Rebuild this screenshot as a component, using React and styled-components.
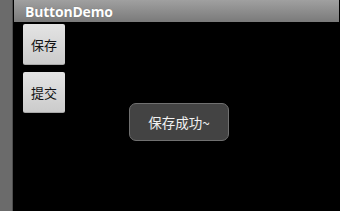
import React from "react";
import styled, { createGlobalStyle } from "styled-components";

const Global = createGlobalStyle`
  html, body { margin: 0; padding: 0; background: #000; }
  body { width: 340px; height: 211px; overflow: hidden; font-family: "Noto Sans", "Noto Sans CJK SC", sans-serif; }
  #root { width: 340px; height: 211px; }
`;

const Screen = styled.div`
  position: relative;
  display: flex;
  width: 340px;
  height: 211px;
  background: #000;
`;

const SideStrip = styled.div`
  width: 12px;
  flex: none;
  background: #6b6b6b;
  border-right: 1px solid #4e4e4e;
`;

const Main = styled.div`
  flex: 1;
  display: flex;
  flex-direction: column;
  padding-left: 1px;
  padding-right: 1px;
`;

const TitleBar = styled.div`
  height: 22px;
  display: flex;
  align-items: center;
  padding-left: 11px;
  background: linear-gradient(#a0a0a0, #7a7a7a);
  color: #fff;
  font-family: "Open Sans", "Noto Sans", sans-serif;
  font-weight: 700;
  font-size: 14px;
  letter-spacing: -0.2px;
  text-shadow: 0 0 1px rgba(0,0,0,0.3);
`;

const Content = styled.div`
  display: flex;
  flex-direction: column;
  gap: 7px;
  padding: 2px 0 0 9px;
`;

const Btn = styled.div`
  width: 42px;
  height: 41px;
  box-sizing: border-box;
  display: flex;
  align-items: center;
  justify-content: center;
  border-radius: 2px;
  background: linear-gradient(#e4e4e4, #cbcbcb);
  border-bottom: 1px solid #a8a8a8;
  color: #111;
  font-family: "Noto Sans CJK SC", sans-serif;
  font-size: 13px;
`;

const Toast = styled.div`
  position: absolute;
  left: 129px;
  top: 103px;
  width: 100px;
  height: 38px;
  box-sizing: border-box;
  display: flex;
  align-items: center;
  justify-content: center;
  background: #434343;
  border: 1px solid #707070;
  border-radius: 7px;
  color: #f2f2f2;
  font-family: "Noto Sans CJK SC", sans-serif;
  font-size: 13.5px;
`;

export default function App() {
  return (
    <>
      <Global />
      <Screen>
        <SideStrip />
        <Main>
          <TitleBar>ButtonDemo</TitleBar>
          <Content>
            <Btn>保存</Btn>
            <Btn>提交</Btn>
          </Content>
        </Main>
        <Toast>保存成功~</Toast>
      </Screen>
    </>
  );
}
